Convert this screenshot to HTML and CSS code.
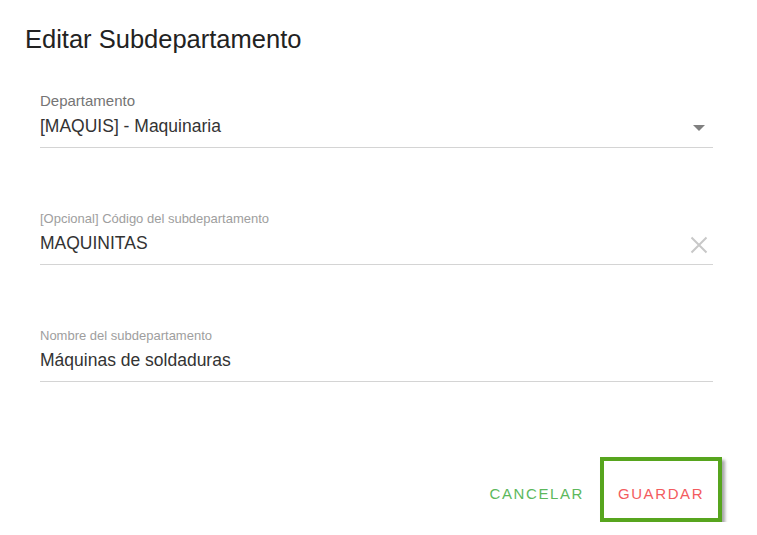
FILE: index.html
```html
<!DOCTYPE html>
<html lang="es">
<head>
<meta charset="utf-8">
<title>Editar Subdepartamento</title>
<link rel="stylesheet" href="styles.css">
</head>
<body>
<div class="dialog">
  <h1 class="title">Editar Subdepartamento</h1>
  <div class="form">
    <div class="field">
      <div class="label label-lg">Departamento</div>
      <div class="control">
        <span class="value">[MAQUIS] - Maquinaria</span>
        <span class="caret"></span>
      </div>
    </div>
    <div class="field">
      <div class="label">[Opcional] Código del subdepartamento</div>
      <div class="control">
        <span class="value">MAQUINITAS</span>
        <svg class="clear" width="18" height="18" viewBox="0 0 18 18"><path d="M1.5 1.5 L16.5 16.5 M16.5 1.5 L1.5 16.5" stroke="#c8c8c8" stroke-width="2" fill="none"/></svg>
      </div>
    </div>
    <div class="field">
      <div class="label">Nombre del subdepartamento</div>
      <div class="control">
        <span class="value">Máquinas de soldaduras</span>
      </div>
    </div>
  </div>
  <div class="actions">
    <button class="btn btn-cancel">CANCELAR</button>
    <button class="btn btn-save">GUARDAR</button>
  </div>
</div>
</body>
</html>
```
FILE: styles.css
```css
html, body {
  margin: 0;
  padding: 0;
  background: #ffffff;
  font-family: "Liberation Sans", Arial, sans-serif;
}
.dialog {
  padding: 24px 44px 0 25px;
  display: flex;
  flex-direction: column;
}
.title {
  margin: 0;
  font-size: 25.5px;
  font-weight: normal;
  color: #222222;
  line-height: 30px;
}
.form {
  display: flex;
  flex-direction: column;
  gap: 63px;
  padding: 39px 0 0 15px;
}
.field {
  display: flex;
  flex-direction: column;
}
.label {
  font-size: 13px;
  color: #9e9e9e;
  line-height: 15px;
}
.label-lg {
  font-size: 15px;
  color: #757575;
  line-height: 16px;
}
.control {
  display: flex;
  align-items: center;
  justify-content: space-between;
  height: 34px;
  border-bottom: 1px solid #d4d4d4;
  margin-top: 4px;
}
.value {
  font-size: 17.5px;
  color: #333333;
  padding-bottom: 8px;
}
.caret {
  width: 0;
  height: 0;
  border-left: 6px solid transparent;
  border-right: 6px solid transparent;
  border-top: 6px solid #808080;
  margin-right: 8px;
  margin-bottom: 4px;
}
.clear {
  margin-right: 5px;
  margin-bottom: 4px;
}
.actions {
  display: flex;
  justify-content: flex-end;
  align-items: center;
  gap: 16px;
  padding-top: 75px;
  margin-right: -9px;
}
.btn {
  background: none;
  border: none;
  font-family: "Liberation Sans", Arial, sans-serif;
  font-size: 15px;
  letter-spacing: 1.6px;
  cursor: pointer;
}
.btn-cancel {
  color: #5cb85c;
  padding: 7px 0 0 0;
}
.btn-save {
  color: #f35b5e;
  border: 4px solid #57a51e;
  box-shadow: 3px 3px 3px rgba(0, 0, 0, 0.35);
  width: 122px;
  height: 65px;
  padding: 7px 0 0 0;
}
```
